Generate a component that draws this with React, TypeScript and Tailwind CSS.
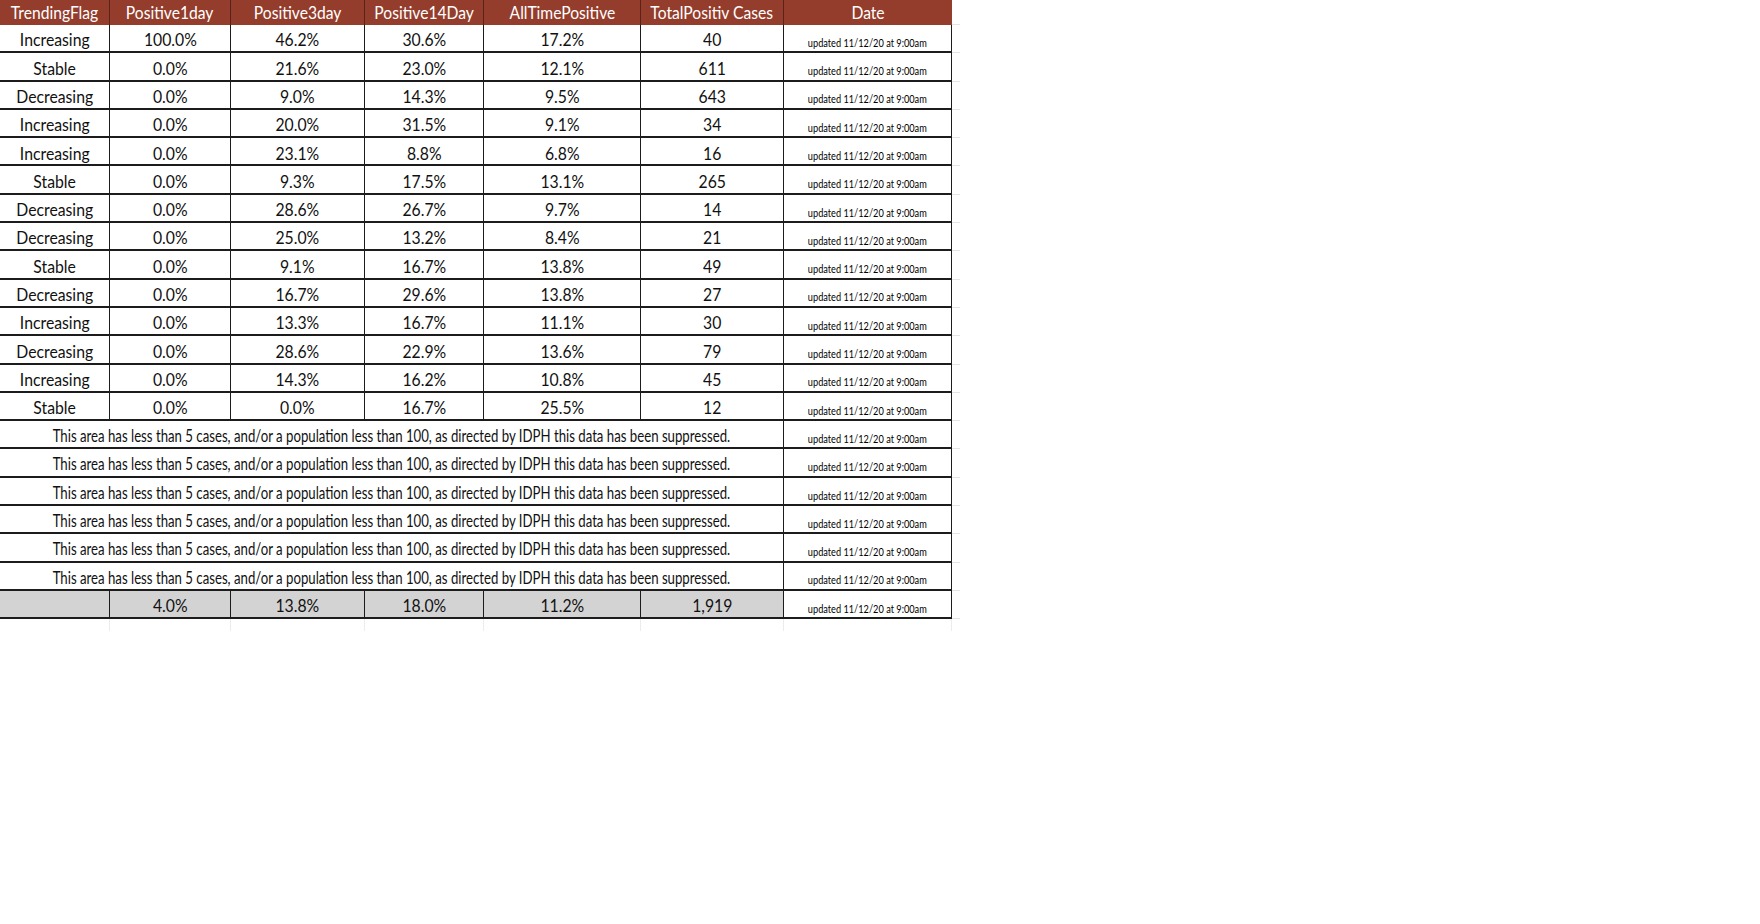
const cols = 'grid grid-cols-[110px_121px_134px_119px_157px_143px_168px_8px]';

const headers = ['TrendingFlag', 'Positive1day', 'Positive3day', 'Positive14Day', 'AllTimePositive', 'TotalPositiv Cases', 'Date'];

const rows: string[][] = [
  ['Increasing', '100.0%', '46.2%', '30.6%', '17.2%', '40'],
  ['Stable', '0.0%', '21.6%', '23.0%', '12.1%', '611'],
  ['Decreasing', '0.0%', '9.0%', '14.3%', '9.5%', '643'],
  ['Increasing', '0.0%', '20.0%', '31.5%', '9.1%', '34'],
  ['Increasing', '0.0%', '23.1%', '8.8%', '6.8%', '16'],
  ['Stable', '0.0%', '9.3%', '17.5%', '13.1%', '265'],
  ['Decreasing', '0.0%', '28.6%', '26.7%', '9.7%', '14'],
  ['Decreasing', '0.0%', '25.0%', '13.2%', '8.4%', '21'],
  ['Stable', '0.0%', '9.1%', '16.7%', '13.8%', '49'],
  ['Decreasing', '0.0%', '16.7%', '29.6%', '13.8%', '27'],
  ['Increasing', '0.0%', '13.3%', '16.7%', '11.1%', '30'],
  ['Decreasing', '0.0%', '28.6%', '22.9%', '13.6%', '79'],
  ['Increasing', '0.0%', '14.3%', '16.2%', '10.8%', '45'],
  ['Stable', '0.0%', '0.0%', '16.7%', '25.5%', '12'],
];

const DATE = 'updated 11/12/20 at 9:00am';
const SUPPRESSED = 'This area has less than 5 cases, and/or a population less than 100, as directed by IDPH this data has been suppressed.';

function DateCell() {
  return (
    <div className="flex items-end justify-center border-r border-b-2 border-[#1c1c1c] pb-[3px]">
      <span className="inline-block scale-x-[0.8] whitespace-nowrap text-[11.5px] leading-none text-black">{DATE}</span>
    </div>
  );
}

function Extra() {
  return <div className="border-b border-[#e4e4e4]" />;
}

function Cell({ text, gray }: { text: string; gray?: boolean }) {
  return (
    <div
      className={`flex items-center justify-center border-r border-b-2 border-[#1c1c1c] pt-[4px] text-[17.5px] leading-none text-[#111] ${gray ? 'bg-[#d3d3d3]' : ''}`}
    >
      <span className="inline-block scale-x-[0.9] whitespace-nowrap">{text}</span>
    </div>
  );
}

export default function App() {
  return (
    <div className="min-h-screen bg-white" style={{ fontFamily: 'Lato, "Open Sans", sans-serif' }}>
      <div className="w-[960px]">
        <div className={`${cols} h-[25px]`}>
          {headers.map((h, i) => (
            <div
              key={h}
              className={`flex items-center justify-center bg-[#943d2c] text-[17px] leading-none text-white ${i < 6 ? 'border-r border-[#5a2218]' : ''}`}
            >
              <span className="inline-block scale-x-[0.92] whitespace-nowrap">{h}</span>
            </div>
          ))}
          <Extra />
        </div>

        {rows.map((r, ri) => (
          <div key={ri} className={`${cols} h-[28.3px]`}>
            {r.map((c, ci) => (
              <Cell key={ci} text={c} />
            ))}
            <DateCell />
            <Extra />
          </div>
        ))}

        {Array.from({ length: 6 }).map((_, i) => (
          <div key={i} className={`${cols} h-[28.3px]`}>
            <div className="col-span-6 flex items-center justify-center border-r border-b-2 border-[#1c1c1c] pt-[4px] text-[16.5px] leading-none text-[#111]">
              <span className="inline-block scale-x-[0.8] whitespace-nowrap">{SUPPRESSED}</span>
            </div>
            <DateCell />
            <Extra />
          </div>
        ))}

        <div className={`${cols} h-[28.3px]`}>
          {['', '4.0%', '13.8%', '18.0%', '11.2%', '1,919'].map((c, ci) => (
            <Cell key={ci} text={c} gray />
          ))}
          <DateCell />
          <Extra />
        </div>

        <div className={`${cols} h-[12px]`}>
          {Array.from({ length: 7 }).map((_, i) => (
            <div key={i} className="border-r border-[#ececec]" />
          ))}
        </div>
      </div>
    </div>
  );
}
